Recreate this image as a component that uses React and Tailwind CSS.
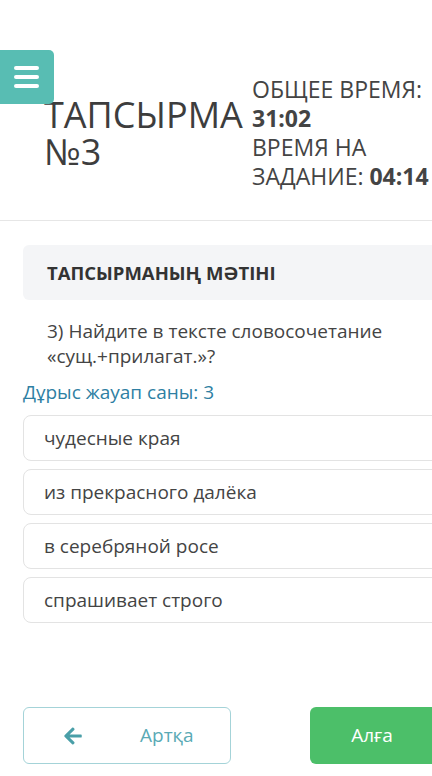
import { FaArrowLeft } from "react-icons/fa";

const options = [
  "чудесные края",
  "из прекрасного далёка",
  "в серебряной росе",
  "спрашивает строго",
];

const App = () => {
  return (
    <div
      className="relative w-[432px] min-h-[776px] overflow-hidden bg-white text-[#444]"
      style={{ fontFamily: '"Open Sans", "Noto Sans", sans-serif' }}
    >
      {/* Menu button */}
      <button className="absolute left-0 top-[50px] z-10 flex h-[54px] w-[54px] flex-col items-center justify-center gap-[5px] rounded-r-[5px] bg-[#58bdb3] pr-[2px]">
        <span className="block h-[4px] w-[25px] rounded-sm bg-white"></span>
        <span className="block h-[4px] w-[25px] rounded-sm bg-white"></span>
        <span className="block h-[4px] w-[25px] rounded-sm bg-white"></span>
      </button>

      {/* Header */}
      <div className="border-b border-[#e6e6e6] pt-[75px] pb-[29px]">
        <div className="flex items-center pl-[44px]">
          <h1 className="w-[208px] shrink-0 text-[36px] leading-[37px] font-normal text-[#3d3d3d]">
            ТАПСЫРМА №3
          </h1>
          <div className="w-[200px] shrink-0 text-[23px] leading-[29px] text-[#444]">
            <p>
              ОБЩЕЕ ВРЕМЯ: <span className="font-bold">31:02</span>
            </p>
            <p>
              ВРЕМЯ НА ЗАДАНИЕ: <span className="font-bold">04:14</span>
            </p>
          </div>
        </div>
      </div>

      {/* Body */}
      <div className="ml-[23px] w-[495px]">
        <div className="mt-[24px] flex h-[55px] items-center rounded-[6px] bg-[#f4f5f7] px-[24px]">
          <h2 className="text-[18.5px] leading-[25px] font-bold text-[#333]">ТАПСЫРМАНЫҢ МӘТІНІ</h2>
        </div>

        <p className="mt-[19px] pl-[24px] pr-[100px] text-[19px] leading-[25px] text-[#444]">
          3) Найдите в тексте словосочетание «сущ.+прилагат.»?
        </p>

        <p className="mt-[11px] text-[19px] leading-[25px] text-[#2e7fa3]">Дұрыс жауап саны: 3</p>

        <div className="mt-[10px] flex flex-col gap-[8px]">
          {options.map((o) => (
            <div
              key={o}
              className="flex h-[46px] items-center rounded-[8px] border border-[#e3e3e3] px-[20px] text-[19px] leading-[25px] text-[#444]"
            >
              {o}
            </div>
          ))}
        </div>

        {/* Navigation */}
        <div className="mt-[84px] flex items-center gap-[79px]">
          <button className="flex h-[57px] w-[208px] items-center rounded-[6px] border border-[#a4d3d8] pl-[39px] text-[19px] text-[#5aaab5]">
            <FaArrowLeft className="text-[20px] text-[#4a9fa8]" />
            <span className="ml-[57px]">Артқа</span>
          </button>
          <button className="flex h-[57px] w-[124px] items-center justify-center rounded-l-[6px] bg-[#4cbf69] text-[19px] text-white">
            Алға
          </button>
        </div>
      </div>
    </div>
  );
};

export default App;
